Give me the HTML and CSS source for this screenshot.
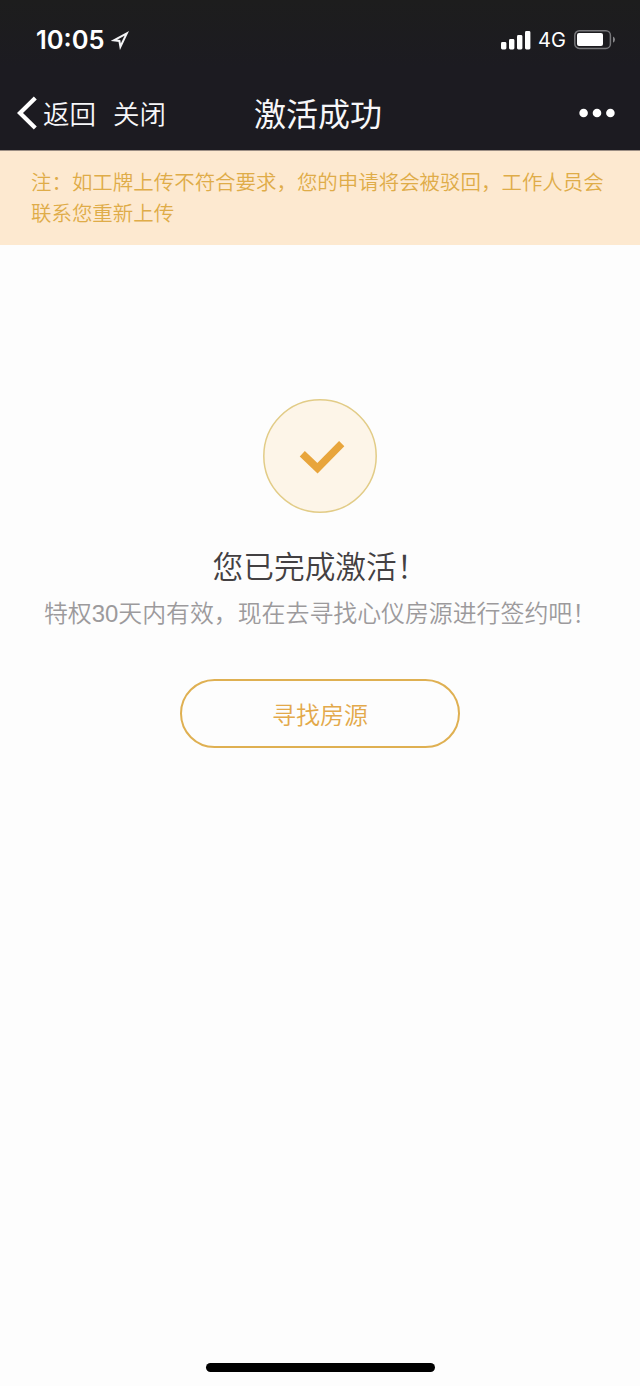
FILE: index.html
```html
<!DOCTYPE html>
<html lang="zh-CN">
<head>
<meta charset="utf-8">
<title>激活成功</title>
<link rel="stylesheet" href="styles.css">
</head>
<body>
<div class="screen">
  <header class="top">
    <div class="status">
      <span class="time">10:05</span>
      <svg class="location" width="18" height="19" viewBox="0 0 18 19"><path d="M15.800 2.400 2.800 9.300 8.400 10 9.400 15.800Z" fill="none" stroke="#f4f4f6" stroke-width="2" stroke-linejoin="miter"/></svg>
      <svg class="signal" width="30" height="19" viewBox="0 0 30 19" fill="#fff"><rect x="0" y="11" width="5.4" height="7.5" rx="1.4"/><rect x="8" y="8" width="5.4" height="10.5" rx="1.4"/><rect x="16" y="4" width="5.4" height="14.5" rx="1.4"/><rect x="24" y="0" width="5.4" height="18.5" rx="1.4"/></svg>
      <span class="network">4G</span>
      <svg class="battery" width="42" height="20" viewBox="0 0 42 20"><rect x=".8" y=".8" width="35.6" height="17.6" rx="4.5" fill="none" stroke="#77777a" stroke-width="1.5"/><rect x="3" y="3" width="26" height="13" rx="2" fill="#fff"/><path d="M39 6.4v6.4q2-1 2-3.2t-2-3.2Z" fill="#88888b"/></svg>
    </div>
    <nav class="nav">
      <div class="actions">
        <svg class="chevron" width="20" height="34" viewBox="0 0 20 34"><path d="M18.300 2 3 17 18.300 32" fill="none" stroke="#fff" stroke-width="4.200"/></svg>
        <span class="back">返回</span>
        <span class="close">关闭</span>
      </div>
      <h1 class="title">激活成功</h1>
      <svg class="more" width="36" height="10" viewBox="0 0 36 10" fill="#fff"><circle cx="4.6" cy="5" r="4.3"/><circle cx="18" cy="5" r="4.3"/><circle cx="31.4" cy="5" r="4.3"/></svg>
    </nav>
  </header>
  <p class="notice">注：如工牌上传不符合要求，您的申请将会被驳回，工作人员会<br>联系您重新上传</p>
  <main class="result">
    <svg class="badge" width="116" height="116" viewBox="0 0 116 116"><circle cx="58" cy="58" r="56.2" fill="#fdf5e8" stroke="#e2cc87" stroke-width="1.5"/><path d="M40.300 55.700 55.500 70.200 79.700 45.700" fill="none" stroke="#e8a53c" stroke-width="7.400"/></svg>
    <h2 class="headline">您已完成激活！</h2>
    <p class="detail">特权30天内有效，现在去寻找心仪房源进行签约吧！</p>
    <button class="find" type="button">寻找房源</button>
  </main>
  <div class="home"></div>
</div>
</body>
</html>
```
FILE: styles.css
```css
* { box-sizing: border-box; }
body {
  margin: 0;
  font-family: "Liberation Sans", "Noto Sans CJK SC", sans-serif;
  background: #fdfdfd;
}
h1, h2, p { margin: 0; font-weight: 350; }
svg { display: block; flex: none; }
.screen {
  width: 640px;
  height: 1386px;
  display: flex;
  flex-direction: column;
  align-items: center;
}
.top {
  width: 100%;
  height: 151px;
  background: linear-gradient(#1d1d1d, #1c1b21 45%);
  border-bottom: 1px solid #9b8e84;
}
.status {
  height: 78px;
  padding: 2px 24px 0 36px;
  display: flex;
  align-items: center;
  color: #fff;
}
.time { width: 75px; font: 600 25.5px/30px Inter, sans-serif; }
.signal { margin-left: 372px; }
.network { width: 36px; padding-left: 7px; font: 400 20px/30px Inter, sans-serif; }
.battery { margin-left: auto; }
.nav {
  height: 72px;
  padding: 0 25px 2px 17px;
  display: grid;
  grid-template-columns: 204px 1fr 200px;
  align-items: center;
  color: #f7f7f9;
}
.actions { display: flex; align-items: center; font-size: 26.5px; font-weight: 350; white-space: nowrap; }
.back, .close { line-height: 38px; padding-top: 3px; }
.back { margin-left: 6px; }
.close { margin-left: 17px; }
.title { padding-bottom: 3px; font-size: 32px; font-weight: 400; text-align: center; white-space: nowrap; }
.more { justify-self: end; }
.notice {
  width: 100%;
  height: 94px;
  padding: 16px 0 0 31px;
  background: #fde9d0;
  color: #dfac48;
  font-size: 20.47px;
  line-height: 31px;
  white-space: nowrap;
}
.result {
  flex: 1;
  padding-top: 153px;
  display: flex;
  flex-direction: column;
  align-items: center;
}
.headline { margin-top: 31px; font-size: 30.7px; line-height: 46px; color: #434042; }
.detail { margin-top: 5px; font-size: 23.9px; line-height: 36px; color: #9c9a9c; white-space: nowrap; }
.find {
  width: 280px;
  height: 69px;
  margin-top: 47px;
  padding: 5px 0 0;
  border: 2px solid #dfb052;
  border-radius: 35px;
  background: transparent;
  color: #e3a94a;
  font: 350 24px/36px "Liberation Sans", "Noto Sans CJK SC", sans-serif;
}
.home { width: 229px; height: 9px; margin-bottom: 14px; border-radius: 5px; background: #000; }
```
